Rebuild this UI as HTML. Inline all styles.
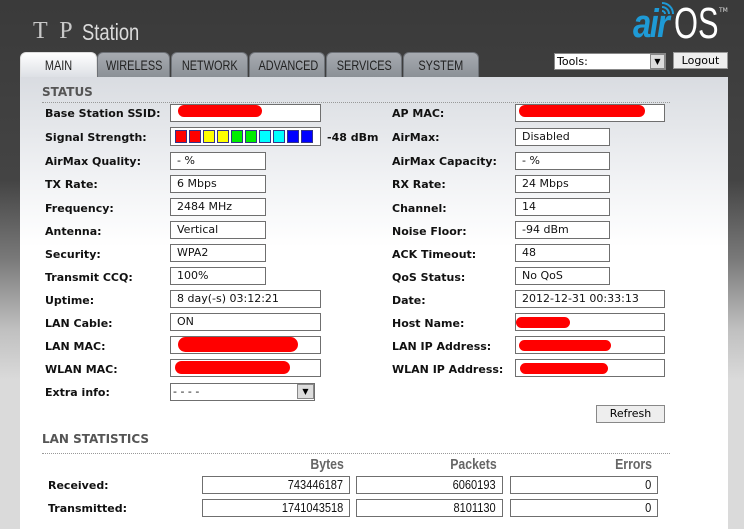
<!DOCTYPE html>
<html><head><meta charset="utf-8"><style>
*{margin:0;padding:0;box-sizing:border-box}
body{width:744px;height:529px;overflow:hidden;position:relative;background:linear-gradient(#3a3a3a 0,#444 180px,#7a7a7a 260px,#c0c0c0 330px,#dadada 380px,#dadada 529px);font-family:"DejaVu Sans","Liberation Sans",sans-serif}
.a{position:absolute}
.panel{left:20px;top:77px;width:708px;height:452px;background:linear-gradient(#d9dce1 0,#f3f4f6 110px,#fff 170px,#fff)}
.tab{top:52px;height:25px;background:linear-gradient(#a7abb1,#8b9096);border:1px solid #6d7177;border-bottom:none;border-radius:6px 6px 0 0;font-family:"Liberation Sans",sans-serif;font-size:14px;color:#222;text-align:center;line-height:25px;white-space:nowrap}
.tab span{display:inline-block;transform:scaleX(.78)}
.lbl{font-size:11px;font-weight:bold;color:#111;top:1px}
.f{height:18px;border:1px solid #6f6f6f;background:#fff;font-size:11px;padding-left:6px;line-height:16px;color:#111}
.red{position:absolute;background:#f00;border-radius:9px}
.h{font-size:12px;font-weight:bold;color:#555}
.dot{height:0;border-top:1px dotted #999}
.num{text-align:right;padding-right:6px;font-size:13px;font-family:"Liberation Sans",sans-serif}
.num span{display:inline-block;transform:scaleX(.85);transform-origin:right}
.ch{font-size:15px;font-weight:bold;color:#666;font-family:"Liberation Sans",sans-serif;text-align:right}
.ch span{display:inline-block;transform:scaleX(.82);transform-origin:right}
</style></head><body>
<div class="a" style="left:33px;top:18px;font-family:'Liberation Serif',serif;font-size:24px;color:#c8c8c8;letter-spacing:3px">T P</div>
<div class="a" style="left:82px;top:19px;font-family:'Liberation Sans',sans-serif;font-size:23px;color:#dcdcdc;transform:scaleX(.8);transform-origin:left">Station</div>
<div class="a" style="left:633px;top:4px;font-family:'Liberation Sans',sans-serif;font-size:40px;line-height:40px;font-style:italic;font-weight:bold;color:#1e9ad6;letter-spacing:-2px;transform:scaleX(.82);transform-origin:left">air</div>
<div class="a" style="left:674px;top:3px;font-family:'Liberation Sans',sans-serif;font-size:44px;line-height:42px;color:#fff;transform:scaleX(.7);transform-origin:left">OS</div>
<div class="a" style="left:719px;top:7px;font-size:6px;color:#ddd">TM</div>
<svg class="a" style="left:659px;top:2px" width="16" height="16"><g fill="none" stroke="#1e9ad6" stroke-width="2"><path d="M3 9a3 3 0 0 1 3 3"/><path d="M3 5a7 7 0 0 1 7 7"/><path d="M3 1a11 11 0 0 1 11 11"/></g></svg>
<div class="a" style="left:554px;top:53px;width:112px;height:17px;background:#fff;border:1px solid #888;font-size:11px;line-height:15px;padding-left:2px">Tools:</div>
<div class="a" style="left:650px;top:54px;width:15px;height:15px;background:#ddd;border:1px solid #888;font-size:8px;text-align:center;line-height:13px">▼</div>
<div class="a" style="left:673px;top:52px;width:55px;height:17px;background:#eee;border:1px solid #999;font-size:11px;text-align:center;line-height:15px">Logout</div>
<div class="a panel"></div>
<div class="a tab" style="left:20px;width:77px;background:linear-gradient(#fff,#dde0e5);border-color:#ddd"><span>MAIN</span></div>
<div class="a tab" style="left:97px;width:73px"><span>WIRELESS</span></div>
<div class="a tab" style="left:171px;width:77px"><span>NETWORK</span></div>
<div class="a tab" style="left:249px;width:76px"><span>ADVANCED</span></div>
<div class="a tab" style="left:326px;width:76px"><span>SERVICES</span></div>
<div class="a tab" style="left:403px;width:76px"><span>SYSTEM</span></div>

<div class="a h" style="left:42px;top:85px">STATUS</div>
<div class="a dot" style="left:42px;top:102px;width:628px"></div>

<div class="a lbl" style="left:45px;top:107px">Base Station SSID:</div>
<div class="a f" style="left:170px;top:104px;width:151px"></div><div class="red" style="left:178px;top:105px;width:84px;height:12px"></div>
<div class="a lbl" style="left:45px;top:131px">Signal Strength:</div>
<div class="a f" style="left:170px;top:127px;width:151px;height:19px"></div>
<div class="a" style="left:175px;top:130px;display:flex;gap:2px">
<i style="width:12px;height:13px;background:#f00;border:1px solid #338"></i><i style="width:12px;height:13px;background:#f00;border:1px solid #338"></i><i style="width:12px;height:13px;background:#ff0;border:1px solid #338"></i><i style="width:12px;height:13px;background:#ff0;border:1px solid #338"></i><i style="width:12px;height:13px;background:#0e0;border:1px solid #338"></i><i style="width:12px;height:13px;background:#0e0;border:1px solid #338"></i><i style="width:12px;height:13px;background:#0ff;border:1px solid #338"></i><i style="width:12px;height:13px;background:#0ff;border:1px solid #338"></i><i style="width:12px;height:13px;background:#00f;border:1px solid #338"></i><i style="width:12px;height:13px;background:#00f;border:1px solid #338"></i></div>
<div class="a lbl" style="left:327px;top:131px">-48 dBm</div>

<div class="a lbl" style="left:45px;top:155px">AirMax Quality:</div><div class="a f" style="left:170px;top:152px;width:96px">- %</div>
<div class="a lbl" style="left:45px;top:178px">TX Rate:</div><div class="a f" style="left:170px;top:175px;width:96px">6 Mbps</div>
<div class="a lbl" style="left:45px;top:202px">Frequency:</div><div class="a f" style="left:170px;top:198px;width:96px">2484 MHz</div>
<div class="a lbl" style="left:45px;top:225px">Antenna:</div><div class="a f" style="left:170px;top:221px;width:96px">Vertical</div>
<div class="a lbl" style="left:45px;top:248px">Security:</div><div class="a f" style="left:170px;top:244px;width:96px">WPA2</div>
<div class="a lbl" style="left:45px;top:271px">Transmit CCQ:</div><div class="a f" style="left:170px;top:267px;width:96px">100%</div>
<div class="a lbl" style="left:45px;top:294px">Uptime:</div><div class="a f" style="left:170px;top:290px;width:151px">8 day(-s) 03:12:21</div>
<div class="a lbl" style="left:45px;top:317px">LAN Cable:</div><div class="a f" style="left:170px;top:313px;width:151px">ON</div>
<div class="a lbl" style="left:45px;top:340px">LAN MAC:</div><div class="a f" style="left:170px;top:336px;width:151px"></div><div class="red" style="left:178px;top:337px;width:120px;height:15px"></div>
<div class="a lbl" style="left:45px;top:363px">WLAN MAC:</div><div class="a f" style="left:170px;top:359px;width:151px"></div><div class="red" style="left:175px;top:361px;width:115px;height:13px"></div>
<div class="a lbl" style="left:45px;top:386px">Extra info:</div><div class="a f" style="left:170px;top:383px;width:145px;line-height:15px;padding-left:2px">- - - -</div>
<div class="a" style="left:297px;top:384px;width:17px;height:15px;background:#ddd;border:1px solid #888;font-size:8px;text-align:center;line-height:13px">▼</div>

<div class="a lbl" style="left:392px;top:107px">AP MAC:</div><div class="a f" style="left:515px;top:104px;width:150px"></div><div class="red" style="left:519px;top:105px;width:126px;height:12px"></div>
<div class="a lbl" style="left:392px;top:131px">AirMax:</div><div class="a f" style="left:515px;top:128px;width:95px">Disabled</div>
<div class="a lbl" style="left:392px;top:155px">AirMax Capacity:</div><div class="a f" style="left:515px;top:152px;width:95px">- %</div>
<div class="a lbl" style="left:392px;top:178px">RX Rate:</div><div class="a f" style="left:515px;top:175px;width:95px">24 Mbps</div>
<div class="a lbl" style="left:392px;top:202px">Channel:</div><div class="a f" style="left:515px;top:198px;width:95px">14</div>
<div class="a lbl" style="left:392px;top:225px">Noise Floor:</div><div class="a f" style="left:515px;top:221px;width:95px">-94 dBm</div>
<div class="a lbl" style="left:392px;top:248px">ACK Timeout:</div><div class="a f" style="left:515px;top:244px;width:95px">48</div>
<div class="a lbl" style="left:392px;top:271px">QoS Status:</div><div class="a f" style="left:515px;top:267px;width:95px">No QoS</div>
<div class="a lbl" style="left:392px;top:294px">Date:</div><div class="a f" style="left:515px;top:290px;width:150px">2012-12-31 00:33:13</div>
<div class="a lbl" style="left:392px;top:317px">Host Name:</div><div class="a f" style="left:515px;top:313px;width:150px"></div><div class="red" style="left:516px;top:317px;width:54px;height:11px"></div>
<div class="a lbl" style="left:392px;top:340px">LAN IP Address:</div><div class="a f" style="left:515px;top:336px;width:150px"></div><div class="red" style="left:519px;top:340px;width:92px;height:11px"></div>
<div class="a lbl" style="left:392px;top:363px">WLAN IP Address:</div><div class="a f" style="left:515px;top:359px;width:150px"></div><div class="red" style="left:520px;top:363px;width:88px;height:11px"></div>

<div class="a" style="left:596px;top:405px;width:69px;height:18px;background:#eee;border:1px solid #888;font-size:11px;text-align:center;line-height:16px">Refresh</div>

<div class="a h" style="left:42px;top:432px">LAN STATISTICS</div>
<div class="a dot" style="left:42px;top:453px;width:628px"></div>
<div class="a ch" style="left:202px;top:456px;width:142px"><span>Bytes</span></div>
<div class="a ch" style="left:356px;top:456px;width:141px"><span>Packets</span></div>
<div class="a ch" style="left:510px;top:456px;width:142px"><span>Errors</span></div>
<div class="a lbl" style="left:48px;top:479px">Received:</div>
<div class="a lbl" style="left:48px;top:502px">Transmitted:</div>
<div class="a f num" style="left:202px;top:476px;width:148px"><span>743446187</span></div>
<div class="a f num" style="left:356px;top:476px;width:147px"><span>6060193</span></div>
<div class="a f num" style="left:510px;top:476px;width:148px"><span>0</span></div>
<div class="a f num" style="left:202px;top:499px;width:148px"><span>1741043518</span></div>
<div class="a f num" style="left:356px;top:499px;width:147px"><span>8101130</span></div>
<div class="a f num" style="left:510px;top:499px;width:148px"><span>0</span></div>
</body></html>
